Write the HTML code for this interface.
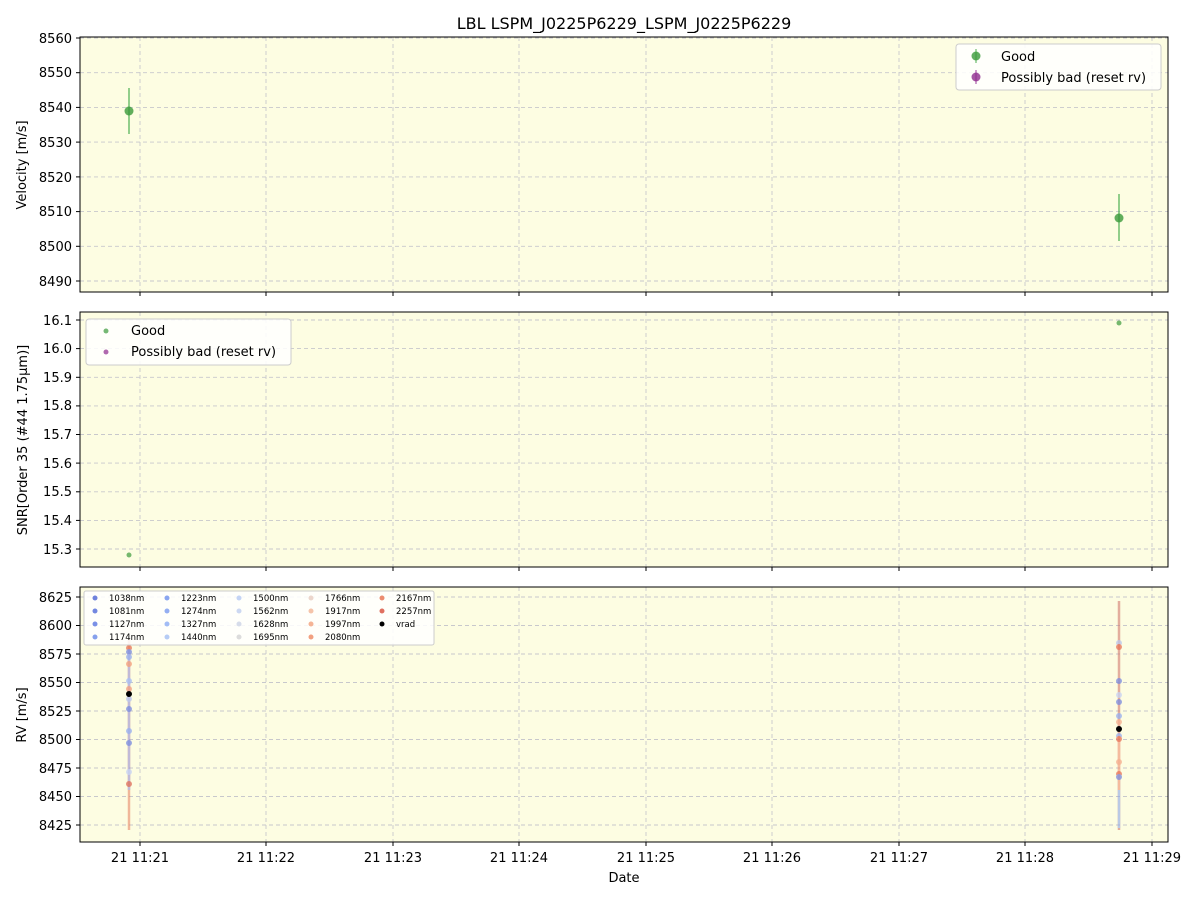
<!DOCTYPE html><html><head><style>body{margin:0;background:#fff}svg{display:block;font-family:"DejaVu Sans","Liberation Sans",sans-serif}</style></head><body>
<svg width="1200" height="900" viewBox="0 0 1200 900" xmlns="http://www.w3.org/2000/svg">
<rect width="1200" height="900" fill="#fff"/>
<text x="624" y="29" font-size="16" text-anchor="middle">LBL LSPM_J0225P6229_LSPM_J0225P6229</text>
<g id="p1">
<rect x="80" y="37" width="1088" height="255" fill="#fdfde2"/>
<g stroke="#c8c8cc" stroke-dasharray="4,3" stroke-width="0.9">
<line x1="140" y1="37" x2="140" y2="292"/><line x1="266" y1="37" x2="266" y2="292"/><line x1="393" y1="37" x2="393" y2="292"/><line x1="519" y1="37" x2="519" y2="292"/><line x1="646" y1="37" x2="646" y2="292"/><line x1="772" y1="37" x2="772" y2="292"/><line x1="899" y1="37" x2="899" y2="292"/><line x1="1025" y1="37" x2="1025" y2="292"/><line x1="1152" y1="37" x2="1152" y2="292"/>
<line x1="80" y1="38" x2="1168" y2="38"/><line x1="80" y1="72.7" x2="1168" y2="72.7"/><line x1="80" y1="107.4" x2="1168" y2="107.4"/><line x1="80" y1="142.1" x2="1168" y2="142.1"/><line x1="80" y1="176.9" x2="1168" y2="176.9"/><line x1="80" y1="211.6" x2="1168" y2="211.6"/><line x1="80" y1="246.3" x2="1168" y2="246.3"/><line x1="80" y1="281" x2="1168" y2="281"/>
</g>
<g stroke="#4caf50" stroke-width="1.5" opacity="0.8"><line x1="129" y1="88" x2="129" y2="134"/><line x1="1119" y1="194" x2="1119" y2="241"/></g>
<circle cx="129" cy="111" r="4.5" fill="#3a9a3a" opacity="0.8"/><circle cx="1119" cy="218" r="4.5" fill="#3a9a3a" opacity="0.8"/>
<rect x="80" y="37" width="1088" height="255" fill="none" stroke="#000" stroke-width="1"/>
<g font-size="13" text-anchor="end"><text x="72" y="43">8560</text><text x="72" y="77">8550</text><text x="72" y="112">8540</text><text x="72" y="147">8530</text><text x="72" y="182">8520</text><text x="72" y="216">8510</text><text x="72" y="251">8500</text><text x="72" y="286">8490</text></g>
<g stroke="#000"><line x1="76" y1="38" x2="80" y2="38"/><line x1="76" y1="72.7" x2="80" y2="72.7"/><line x1="76" y1="107.4" x2="80" y2="107.4"/><line x1="76" y1="142.1" x2="80" y2="142.1"/><line x1="76" y1="176.9" x2="80" y2="176.9"/><line x1="76" y1="211.6" x2="80" y2="211.6"/><line x1="76" y1="246.3" x2="80" y2="246.3"/><line x1="76" y1="281" x2="80" y2="281"/>
<line x1="140" y1="292" x2="140" y2="296"/><line x1="266" y1="292" x2="266" y2="296"/><line x1="393" y1="292" x2="393" y2="296"/><line x1="519" y1="292" x2="519" y2="296"/><line x1="646" y1="292" x2="646" y2="296"/><line x1="772" y1="292" x2="772" y2="296"/><line x1="899" y1="292" x2="899" y2="296"/><line x1="1025" y1="292" x2="1025" y2="296"/><line x1="1152" y1="292" x2="1152" y2="296"/></g>
<text transform="translate(26,165) rotate(-90)" font-size="13" text-anchor="middle">Velocity [m/s]</text>
<rect x="956" y="44" width="205" height="46" rx="3" fill="#fff" fill-opacity="0.85" stroke="#ccc"/>
<line x1="976" y1="49" x2="976" y2="63" stroke="#4caf50"/><circle cx="976" cy="56" r="4.5" fill="#3a9a3a" opacity="0.8"/>
<line x1="976" y1="70" x2="976" y2="84" stroke="#9b3b9b"/><circle cx="976" cy="77" r="4.5" fill="#8e2a8e" opacity="0.8"/>
<text x="1001" y="61" font-size="13">Good</text><text x="1001" y="82" font-size="13">Possibly bad (reset rv)</text>
</g>
<g id="p2">
<rect x="80" y="312" width="1088" height="255" fill="#fdfde2"/>
<g stroke="#c8c8cc" stroke-dasharray="4,3" stroke-width="0.9">
<line x1="140" y1="312" x2="140" y2="567"/><line x1="266" y1="312" x2="266" y2="567"/><line x1="393" y1="312" x2="393" y2="567"/><line x1="519" y1="312" x2="519" y2="567"/><line x1="646" y1="312" x2="646" y2="567"/><line x1="772" y1="312" x2="772" y2="567"/><line x1="899" y1="312" x2="899" y2="567"/><line x1="1025" y1="312" x2="1025" y2="567"/><line x1="1152" y1="312" x2="1152" y2="567"/>
<line x1="80" y1="320" x2="1168" y2="320"/><line x1="80" y1="348.6" x2="1168" y2="348.6"/><line x1="80" y1="377.3" x2="1168" y2="377.3"/><line x1="80" y1="405.9" x2="1168" y2="405.9"/><line x1="80" y1="434.5" x2="1168" y2="434.5"/><line x1="80" y1="463.1" x2="1168" y2="463.1"/><line x1="80" y1="491.8" x2="1168" y2="491.8"/><line x1="80" y1="520.4" x2="1168" y2="520.4"/><line x1="80" y1="549" x2="1168" y2="549"/>
</g>
<circle cx="1119" cy="323" r="2.5" fill="#3a9a3a" opacity="0.7"/><circle cx="129" cy="555" r="2.5" fill="#3a9a3a" opacity="0.7"/>
<rect x="80" y="312" width="1088" height="255" fill="none" stroke="#000"/>
<g font-size="13" text-anchor="end"><text x="72" y="325">16.1</text><text x="72" y="353">16.0</text><text x="72" y="382">15.9</text><text x="72" y="410">15.8</text><text x="72" y="439">15.7</text><text x="72" y="468">15.6</text><text x="72" y="496">15.5</text><text x="72" y="525">15.4</text><text x="72" y="554">15.3</text></g>
<g stroke="#000"><line x1="76" y1="320" x2="80" y2="320"/><line x1="76" y1="348.6" x2="80" y2="348.6"/><line x1="76" y1="377.3" x2="80" y2="377.3"/><line x1="76" y1="405.9" x2="80" y2="405.9"/><line x1="76" y1="434.5" x2="80" y2="434.5"/><line x1="76" y1="463.1" x2="80" y2="463.1"/><line x1="76" y1="491.8" x2="80" y2="491.8"/><line x1="76" y1="520.4" x2="80" y2="520.4"/><line x1="76" y1="549" x2="80" y2="549"/>
<line x1="140" y1="567" x2="140" y2="571"/><line x1="266" y1="567" x2="266" y2="571"/><line x1="393" y1="567" x2="393" y2="571"/><line x1="519" y1="567" x2="519" y2="571"/><line x1="646" y1="567" x2="646" y2="571"/><line x1="772" y1="567" x2="772" y2="571"/><line x1="899" y1="567" x2="899" y2="571"/><line x1="1025" y1="567" x2="1025" y2="571"/><line x1="1152" y1="567" x2="1152" y2="571"/></g>
<text transform="translate(27,440) rotate(-90)" font-size="13" text-anchor="middle">SNR[Order 35 (#44 1.75μm)]</text>
<rect x="86" y="319" width="205" height="46" rx="3" fill="#fff" fill-opacity="0.85" stroke="#ccc"/>
<circle cx="106" cy="331" r="2.5" fill="#3a9a3a" opacity="0.7"/><circle cx="106" cy="352" r="2.5" fill="#8e2a8e" opacity="0.7"/>
<text x="131" y="335" font-size="13">Good</text><text x="131" y="356" font-size="13">Possibly bad (reset rv)</text>
</g>
<g id="p3">
<rect x="80" y="587" width="1088" height="255" fill="#fdfde2"/>
<g stroke="#c8c8cc" stroke-dasharray="4,3" stroke-width="0.9">
<line x1="140" y1="587" x2="140" y2="842"/><line x1="266" y1="587" x2="266" y2="842"/><line x1="393" y1="587" x2="393" y2="842"/><line x1="519" y1="587" x2="519" y2="842"/><line x1="646" y1="587" x2="646" y2="842"/><line x1="772" y1="587" x2="772" y2="842"/><line x1="899" y1="587" x2="899" y2="842"/><line x1="1025" y1="587" x2="1025" y2="842"/><line x1="1152" y1="587" x2="1152" y2="842"/>
<line x1="80" y1="597" x2="1168" y2="597"/><line x1="80" y1="625.5" x2="1168" y2="625.5"/><line x1="80" y1="654" x2="1168" y2="654"/><line x1="80" y1="682.5" x2="1168" y2="682.5"/><line x1="80" y1="711" x2="1168" y2="711"/><line x1="80" y1="739.5" x2="1168" y2="739.5"/><line x1="80" y1="768" x2="1168" y2="768"/><line x1="80" y1="796.5" x2="1168" y2="796.5"/><line x1="80" y1="825" x2="1168" y2="825"/>
</g>
<g stroke-width="2.5" opacity="0.6">
<line x1="129" y1="640" x2="129" y2="830" stroke="#e88a6a"/><line x1="129" y1="650" x2="129" y2="790" stroke="#9a8fd0"/>
<line x1="1119" y1="601" x2="1119" y2="830" stroke="#d27a70"/><line x1="1119" y1="780" x2="1119" y2="828" stroke="#8fa8e8"/><line x1="1119" y1="740" x2="1119" y2="790" stroke="#f09070"/>
</g>
<g opacity="0.75">
<circle cx="129" cy="648" r="3" fill="#e8765a"/><circle cx="129" cy="652" r="3" fill="#7b8de0"/><circle cx="129" cy="657" r="3" fill="#98b0f0"/><circle cx="129" cy="664" r="3" fill="#f5a07c"/><circle cx="129" cy="681" r="3" fill="#a8c0f5"/><circle cx="129" cy="689" r="3" fill="#f4a080"/><circle cx="129" cy="699" r="3" fill="#bcc8ee"/><circle cx="129" cy="709" r="3" fill="#7b8de0"/><circle cx="129" cy="731" r="3" fill="#98b0f0"/><circle cx="129" cy="743" r="3" fill="#7b8de0"/><circle cx="129" cy="772" r="3" fill="#c8d4f5"/><circle cx="129" cy="784" r="3" fill="#e0705a"/>
<circle cx="1119" cy="643" r="3" fill="#bcc8ee"/><circle cx="1119" cy="647" r="3" fill="#e8765a"/><circle cx="1119" cy="681" r="3" fill="#7b8de0"/><circle cx="1119" cy="695" r="3" fill="#c8d4f5"/><circle cx="1119" cy="702" r="3" fill="#7b8de0"/><circle cx="1119" cy="716" r="3" fill="#98b0f0"/><circle cx="1119" cy="722" r="3" fill="#f5b090"/><circle cx="1119" cy="736" r="3" fill="#98b0f0"/><circle cx="1119" cy="739" r="3" fill="#e8765a"/><circle cx="1119" cy="762" r="3" fill="#f5b090"/><circle cx="1119" cy="774" r="3" fill="#e8765a"/><circle cx="1119" cy="777" r="3" fill="#7b8de0"/>
</g>
<circle cx="129" cy="694" r="3" fill="#000"/><circle cx="1119" cy="729" r="3" fill="#000"/>
<rect x="80" y="587" width="1088" height="255" fill="none" stroke="#000"/>
<g font-size="13" text-anchor="end"><text x="72" y="602">8625</text><text x="72" y="630">8600</text><text x="72" y="659">8575</text><text x="72" y="687">8550</text><text x="72" y="716">8525</text><text x="72" y="744">8500</text><text x="72" y="773">8475</text><text x="72" y="801">8450</text><text x="72" y="830">8425</text></g>
<g stroke="#000"><line x1="76" y1="597" x2="80" y2="597"/><line x1="76" y1="625.5" x2="80" y2="625.5"/><line x1="76" y1="654" x2="80" y2="654"/><line x1="76" y1="682.5" x2="80" y2="682.5"/><line x1="76" y1="711" x2="80" y2="711"/><line x1="76" y1="739.5" x2="80" y2="739.5"/><line x1="76" y1="768" x2="80" y2="768"/><line x1="76" y1="796.5" x2="80" y2="796.5"/><line x1="76" y1="825" x2="80" y2="825"/>
<line x1="140" y1="842" x2="140" y2="846"/><line x1="266" y1="842" x2="266" y2="846"/><line x1="393" y1="842" x2="393" y2="846"/><line x1="519" y1="842" x2="519" y2="846"/><line x1="646" y1="842" x2="646" y2="846"/><line x1="772" y1="842" x2="772" y2="846"/><line x1="899" y1="842" x2="899" y2="846"/><line x1="1025" y1="842" x2="1025" y2="846"/><line x1="1152" y1="842" x2="1152" y2="846"/></g>
<text transform="translate(26,715) rotate(-90)" font-size="13" text-anchor="middle">RV [m/s]</text>
<rect x="84" y="591" width="350" height="54" rx="2" fill="#fff" fill-opacity="0.85" stroke="#ccc"/>
<g font-size="8.5">
<circle cx="95" cy="598" r="2.5" fill="#6f82dc"/><circle cx="95" cy="611" r="2.5" fill="#7388e0"/><circle cx="95" cy="624" r="2.5" fill="#7a90e6"/><circle cx="95" cy="637" r="2.5" fill="#86a0ec"/>
<text x="109" y="601">1038nm</text><text x="109" y="614">1081nm</text><text x="109" y="627">1127nm</text><text x="109" y="640">1174nm</text>
<circle cx="167" cy="598" r="2.5" fill="#8aa6f0"/><circle cx="167" cy="611" r="2.5" fill="#94aef2"/><circle cx="167" cy="624" r="2.5" fill="#a2bcf5"/><circle cx="167" cy="637" r="2.5" fill="#b6ccf5"/>
<text x="181" y="601">1223nm</text><text x="181" y="614">1274nm</text><text x="181" y="627">1327nm</text><text x="181" y="640">1440nm</text>
<circle cx="239" cy="598" r="2.5" fill="#c4d4f5"/><circle cx="239" cy="611" r="2.5" fill="#ccd8f2"/><circle cx="239" cy="624" r="2.5" fill="#d6dcea"/><circle cx="239" cy="637" r="2.5" fill="#dcdcdc"/>
<text x="253" y="601">1500nm</text><text x="253" y="614">1562nm</text><text x="253" y="627">1628nm</text><text x="253" y="640">1695nm</text>
<circle cx="311" cy="598" r="2.5" fill="#ecd6cc"/><circle cx="311" cy="611" r="2.5" fill="#f5c4aa"/><circle cx="311" cy="624" r="2.5" fill="#f5b496"/><circle cx="311" cy="637" r="2.5" fill="#f2a080"/>
<text x="325" y="601">1766nm</text><text x="325" y="614">1917nm</text><text x="325" y="627">1997nm</text><text x="325" y="640">2080nm</text>
<circle cx="382" cy="598" r="2.5" fill="#ec8c70"/><circle cx="382" cy="611" r="2.5" fill="#e07060"/><circle cx="382" cy="624" r="2.5" fill="#000"/>
<text x="396" y="601">2167nm</text><text x="396" y="614">2257nm</text><text x="396" y="627">vrad</text>
</g>
<g font-size="13" text-anchor="middle"><text x="140" y="862">21 11:21</text><text x="266" y="862">21 11:22</text><text x="393" y="862">21 11:23</text><text x="519" y="862">21 11:24</text><text x="646" y="862">21 11:25</text><text x="772" y="862">21 11:26</text><text x="899" y="862">21 11:27</text><text x="1025" y="862">21 11:28</text><text x="1152" y="862">21 11:29</text><text x="624" y="882">Date</text></g>
</g>
</svg></body></html>
